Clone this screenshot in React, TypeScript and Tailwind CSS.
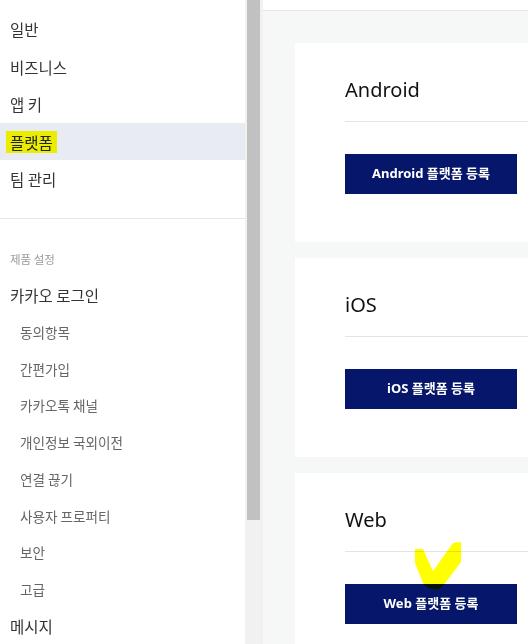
import React from "react";

const KR = '"Noto Sans CJK KR", "Noto Sans", sans-serif';
const LATIN = '"Noto Sans", "Noto Sans CJK KR", sans-serif';

function TopItem({ label, active }: { label: string; active?: boolean }) {
  return (
    <div
      className={
        "h-[38px] flex items-center pl-[10px] text-[15.5px] leading-5 pt-[1px] " +
        (active ? "bg-[#e8ebf2] text-[#222]" : "text-[#333]")
      }
    >
      {active ? (
        <span className="bg-[#eaed00] px-[4px] -ml-[4px] py-[1px]">{label}</span>
      ) : (
        label
      )}
    </div>
  );
}

function SubItem({ label, main }: { label: string; main?: boolean }) {
  return (
    <div
      className={
        "h-[37.2px] flex items-center " +
        (main ? "pl-[10px] text-[15.5px] text-[#333]" : "pl-[20px] text-[13.6px] text-[#666]") +
        " leading-5"
      }
    >
      {label}
    </div>
  );
}

function Card({ title, check }: { title: string; check?: boolean }) {
  return (
    <div className="relative w-[600px] h-[199px] shrink-0 bg-white pl-[50px] pr-[50px] pt-[33px]">
      <div className="text-[20px] leading-[28px] text-[#111]" style={{ fontFamily: LATIN }}>
        {title}
      </div>
      <div className="mt-[17px] border-t border-[#e4e4e4]" />
      <div
        className="mt-[32px] w-[172px] h-[40px] bg-[#05166b] text-white text-[13px] font-bold flex items-center justify-center"
        style={{ fontFamily: LATIN }}
      >
        {title} 플랫폼 등록
      </div>
      {check && (
        <svg
          className="absolute left-[120px] top-[69px] mix-blend-multiply"
          width="48"
          height="49"
          viewBox="0 0 48 49"
        >
          <path
            d="M0 7 L8 7 L18 29 L38 1 L46 0 L46 20 L28 44 Q24 48 18 47 Q11 46 8 41 L0 21 Z"
            fill="#ffff00"
          />
        </svg>
      )}
    </div>
  );
}

export default function App() {
  return (
    <div className="w-[528px] h-[644px] overflow-hidden flex bg-white" style={{ fontFamily: KR }}>
      <div className="w-[245px] shrink-0 bg-white flex flex-col pt-[10px]">
        <TopItem label="일반" />
        <TopItem label="비즈니스" />
        <TopItem label="앱 키" />
        <TopItem label="플랫폼" active />
        <TopItem label="팀 관리" />
        <div className="mt-[20px] border-t border-[#e6e6e6]" />
        <div className="h-[59px] flex items-end pb-[10px] pl-[10px] text-[11.5px] leading-4 text-[#999]">
          제품 설정
        </div>
        <SubItem label="카카오 로그인" main />
        <SubItem label="동의항목" />
        <SubItem label="간편가입" />
        <SubItem label="카카오톡 채널" />
        <SubItem label="개인정보 국외이전" />
        <SubItem label="연결 끊기" />
        <SubItem label="사용자 프로퍼티" />
        <SubItem label="보안" />
        <SubItem label="고급" />
        <SubItem label="메시지" main />
      </div>
      <div className="w-[18px] shrink-0 bg-[#f1f1f1] pl-[2px] pr-[3px]">
        <div className="h-[520px] bg-[#c1c1c1]" />
      </div>
      <div className="flex-1 min-w-0 overflow-hidden flex flex-col bg-[#f6f7f7]">
        <div className="h-[11px] shrink-0 bg-white border-b border-[#e6e6e6]" />
        <div className="pt-[32px] pl-[32px] flex flex-col gap-[16px]">
          <Card title="Android" />
          <Card title="iOS" />
          <Card title="Web" check />
        </div>
      </div>
    </div>
  );
}
